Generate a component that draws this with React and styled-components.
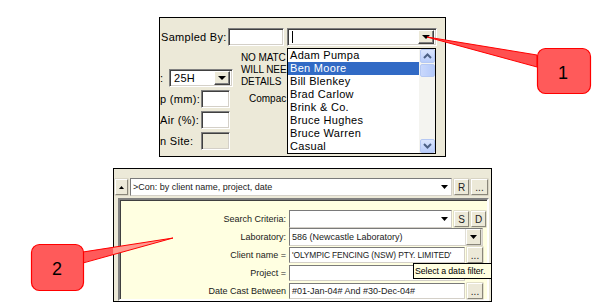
import React from "react";
import styled, { createGlobalStyle } from "styled-components";

const GlobalStyle = createGlobalStyle`
  html, body { margin: 0; padding: 0; background: #fff; }
  * { box-sizing: border-box; }
`;

const people = [
  "Adam Pumpa",
  "Ben Moore",
  "Bill Blenkey",
  "Brad Carlow",
  "Brink & Co.",
  "Bruce Hughes",
  "Bruce Warren",
  "Casual",
];

const ComboArrow = () => (
  <svg width="7" height="4" viewBox="0 0 7 4">
    <path d="M0 0 H7 L3.5 4Z" fill="#000" />
  </svg>
);

export default function App() {
  return (
    <Page>
      <GlobalStyle />
      <FormShot>
        <TopRow>
          <FormLabel width={67}>Sampled By:</FormLabel>
          <XpInput width={56} />
          <XpCombo width={150} style={{ marginLeft: 3 }}>
            <Caret />
            <DropBtn>
              <DownArrow />
            </DropBtn>
          </XpCombo>
        </TopRow>
        <Body>
          <LeftCol>
            <FieldRow>
              <FormLabel width={9}>:</FormLabel>
              <XpCombo width={64}>
                <span>25H</span>
                <DropBtn>
                  <DownArrow />
                </DropBtn>
              </XpCombo>
            </FieldRow>
            <FieldRow>
              <FormLabel width={41}>p (mm):</FormLabel>
              <XpInput width={29} />
            </FieldRow>
            <FieldRow>
              <FormLabel width={41}>Air (%):</FormLabel>
              <XpInput width={29} />
            </FieldRow>
            <FieldRow>
              <FormLabel width={41}>n Site:</FormLabel>
              <XpInput width={29} disabled />
            </FieldRow>
          </LeftCol>
          <MidCol>
            <Warning>
              NO MATC
              <br />
              WILL NEE
              <br />
              DETAILS
            </Warning>
            <Compac>Compac</Compac>
          </MidCol>
        </Body>
        <DropList>
          <Items>
            {people.map((p, i) => (
              <Item key={p} selected={i === 1}>
                {p}
              </Item>
            ))}
          </Items>
          <ScrollBar>
            <ScrollBtn>
              <svg width="9" height="6" viewBox="0 0 9 6">
                <path d="M1 5 L4.5 1.5 L8 5" fill="none" stroke="#4D6185" strokeWidth="2" />
              </svg>
            </ScrollBtn>
            <Thumb />
            <Track />
            <ScrollBtn>
              <svg width="9" height="6" viewBox="0 0 9 6">
                <path d="M1 1 L4.5 4.5 L8 1" fill="none" stroke="#4D6185" strokeWidth="2" />
              </svg>
            </ScrollBtn>
          </ScrollBar>
        </DropList>
      </FormShot>

      <QueryShot>
        <Toolbar>
          <SmallBtn width={13}>
            <svg width="5" height="3" viewBox="0 0 5 3">
              <path d="M0 3 L2.5 0 L5 3Z" fill="#000" />
            </svg>
          </SmallBtn>
          <QCombo width={322}>
            <span>&gt;Con: by client name, project, date</span>
            <QArrow>
              <ComboArrow />
            </QArrow>
          </QCombo>
          <SmallBtn width={15}>R</SmallBtn>
          <SmallBtn width={17}>...</SmallBtn>
        </Toolbar>
        <Panel>
          <QRow>
            <QLabel>Search Criteria:</QLabel>
            <QCombo width={163}>
              <span />
              <QArrow>
                <ComboArrow />
              </QArrow>
            </QCombo>
            <SmallBtn width={15}>S</SmallBtn>
            <SmallBtn width={15}>D</SmallBtn>
          </QRow>
          <QRow>
            <QLabel>Laboratory:</QLabel>
            <QCombo width={194}>
              <span>586 (Newcastle Laboratory)</span>
              <SmallBtn width={15}>
                <ComboArrow />
              </SmallBtn>
            </QCombo>
          </QRow>
          <QRow>
            <QLabel>Client name =</QLabel>
            <QField width={176} tight>
              'OLYMPIC FENCING (NSW) PTY. LIMITED'
            </QField>
            <SmallBtn width={16}>...</SmallBtn>
          </QRow>
          <QRow>
            <QLabel>Project =</QLabel>
            <QField width={176} />
          </QRow>
          <QRow>
            <QLabel>Date Cast Between</QLabel>
            <QField width={176}>#01-Jan-04# And #30-Dec-04#</QField>
            <SmallBtn width={16}>...</SmallBtn>
          </QRow>
          <Tip>Select a data filter.</Tip>
        </Panel>
      </QueryShot>

      <Callouts width="598" height="305" viewBox="0 0 598 305">
        <polygon points="427,37 537,55 537,67" fill="#FF5050" stroke="#FF0000" strokeWidth="1" />
        <rect x="537.5" y="48.5" width="53" height="45" rx="8" fill="#FF5A5A" stroke="#FF0000" strokeWidth="1.2" />
        <text x="563" y="79" textAnchor="middle" fontFamily="Liberation Sans, Arial, sans-serif" fontSize="18" fill="#000">1</text>

        <polygon points="82,252 113,247.2 113,254.7 82,263" fill="#FF5A5A" />
        <polygon points="113,247.2 173,238 113,254.7" fill="#FF9A90" />
        <polyline points="83,252 173,238 83,263" fill="none" stroke="#FF0000" strokeWidth="1" />
        <rect x="31.5" y="244.5" width="52" height="46" rx="8" fill="#FF5A5A" stroke="#FF0000" strokeWidth="1.2" />
        <text x="57" y="275" textAnchor="middle" fontFamily="Liberation Sans, Arial, sans-serif" fontSize="18" fill="#000">2</text>
      </Callouts>
    </Page>
  );
}

const Page = styled.div`
  position: relative;
  width: 598px;
  height: 305px;
  overflow: hidden;
  background: #fff;
  display: flex;
  flex-direction: column;
  align-items: flex-start;
`;

/* ---------- screenshot 1 ---------- */

const FormShot = styled.div`
  position: relative;
  margin: 17px 0 0 159px;
  width: 287px;
  height: 140px;
  border: 1px solid #000;
  background: #ece9d8;
  overflow: hidden;
  font-family: "Liberation Sans", Arial, sans-serif;
  font-size: 11px;
  letter-spacing: 0.3px;
  color: #000;
`;

const TopRow = styled.div`
  display: flex;
  align-items: center;
  margin-top: 10px;
  padding-left: 1px;
`;

const FormLabel = styled.div`
  width: ${(p) => p.width}px;
  white-space: nowrap;
  overflow: hidden;
`;

const XpInput = styled.div`
  width: ${(p) => p.width}px;
  height: 18px;
  background: ${(p) => (p.disabled ? "#ece9d8" : "#fff")};
  border: 1px solid;
  border-color: #808080 #fff #fff #808080;
  box-shadow: inset 1px 1px #404040, inset -1px -1px #d4d0c8;
`;

const XpCombo = styled(XpInput)`
  display: flex;
  align-items: center;
  justify-content: space-between;
  background: #fff;
  padding: 2px 2px 2px 4px;
`;

const Caret = styled.span`
  width: 1px;
  height: 12px;
  background: #000;
`;

const DropBtn = styled.div`
  width: 16px;
  height: 14px;
  background: #ece9d8;
  border: 1px solid;
  border-color: #fff #404040 #404040 #fff;
  box-shadow: inset -1px -1px #808080;
  display: flex;
  align-items: center;
  justify-content: center;
`;

const DownArrow = styled.span`
  width: 0;
  height: 0;
  border-left: 4px solid transparent;
  border-right: 4px solid transparent;
  border-top: 4px solid #000;
`;

const Body = styled.div`
  display: flex;
`;

const LeftCol = styled.div`
  display: flex;
  flex-direction: column;
  gap: 3px;
  margin-top: 23px;
`;

const FieldRow = styled.div`
  display: flex;
  align-items: center;
  height: 18px;
`;

const MidCol = styled.div`
  margin-left: 8px;
  margin-top: 6px;
  font-size: 10px;
  letter-spacing: 0;
`;

const Warning = styled.div`
  line-height: 12px;
  white-space: nowrap;
  letter-spacing: -0.1px;
`;

const Compac = styled.div`
  margin: 5px 0 0 8px;
  white-space: nowrap;
`;

const DropList = styled.div`
  position: absolute;
  left: 127px;
  top: 30px;
  width: 149px;
  height: 106px;
  border: 1px solid #000;
  background: #fff;
  display: flex;
`;

const Items = styled.div`
  flex: 1;
  display: flex;
  flex-direction: column;
`;

const Item = styled.div`
  height: 13px;
  line-height: 13px;
  padding-left: 2px;
  white-space: nowrap;
  background: ${(p) => (p.selected ? "#316ac5" : "transparent")};
  color: ${(p) => (p.selected ? "#fff" : "#000")};
`;

const ScrollBar = styled.div`
  width: 16px;
  display: flex;
  flex-direction: column;
  background: #f4f4f0;
`;

const ScrollBtn = styled.div`
  height: 14px;
  margin-left: 1px;
  border: 1px solid #b5c8f3;
  border-radius: 2px;
  background: linear-gradient(#dbe6fd, #b9cdfb);
  display: flex;
  align-items: center;
  justify-content: center;
`;

const Thumb = styled.div`
  height: 13px;
  margin: 1px 0 0 1px;
  border: 1px solid #b5c8f3;
  border-radius: 2px;
  background: linear-gradient(90deg, #c9d8fc, #b4c9fa);
`;

const Track = styled.div`
  flex: 1;
`;

/* ---------- screenshot 2 ---------- */

const QueryShot = styled.div`
  margin: 11px 0 0 113px;
  width: 379px;
  height: 134px;
  border: 1px solid #000;
  background: #ece9d8;
  display: flex;
  flex-direction: column;
  font-family: "Liberation Sans", Arial, sans-serif;
  font-size: 9px;
  color: #1a1a1a;
`;

const Toolbar = styled.div`
  height: 29px;
  display: flex;
  align-items: center;
  gap: 2px;
  padding: 9px 0 2px 1px;
`;

const SmallBtn = styled.div`
  width: ${(p) => p.width}px;
  height: 16px;
  flex: none;
  background: #ece9d8;
  border: 1px solid;
  border-color: #fff #8a877a #8a877a #fff;
  box-shadow: 0 0 0 0.5px #c4c0b0;
  display: flex;
  align-items: center;
  justify-content: center;
  font-size: 10px;
  color: #222;
`;

const QField = styled.div`
  width: ${(p) => p.width}px;
  height: 16px;
  flex: none;
  background: #fff;
  border: 1px solid;
  border-color: #7a7a7a #d4d0c8 #d4d0c8 #7a7a7a;
  padding-left: 2px;
  line-height: 14px;
  white-space: nowrap;
  overflow: hidden;
  font-size: ${(p) => (p.tight ? "8.4px" : "9px")};
  letter-spacing: ${(p) => (p.tight ? "-0.1px" : "0")};
`;

const QCombo = styled(QField)`
  display: flex;
  align-items: center;
  justify-content: space-between;
  padding-right: 1px;
  height: 18px;
`;

const QArrow = styled.div`
  width: 12px;
  display: flex;
  justify-content: center;
`;

const Panel = styled.div`
  position: relative;
  flex: 1;
  margin: 0 2px 3px 4px;
  background: #ffffe1;
  border: 2px solid;
  border-color: #808080 #fff #fff #808080;
  box-shadow: inset 1px 1px #404040;
  padding-top: 11px;
  display: flex;
  flex-direction: column;
  gap: 2px;
`;

const QRow = styled.div`
  height: 16px;
  display: flex;
  align-items: center;
  gap: 2px;
`;

const QLabel = styled.div`
  width: 167px;
  text-align: right;
  padding-right: 1px;
  white-space: nowrap;
`;

const Tip = styled.div`
  position: absolute;
  left: 293px;
  top: 63px;
  width: 79px;
  height: 16px;
  background: #ffffe1;
  border: 1px solid #000;
  line-height: 14px;
  padding-left: 1px;
  white-space: nowrap;
  overflow: hidden;
  font-size: 8.8px;
  letter-spacing: -0.1px;
  color: #000;
`;

const Callouts = styled.svg`
  position: absolute;
  left: 0;
  top: 0;
  pointer-events: none;
`;
